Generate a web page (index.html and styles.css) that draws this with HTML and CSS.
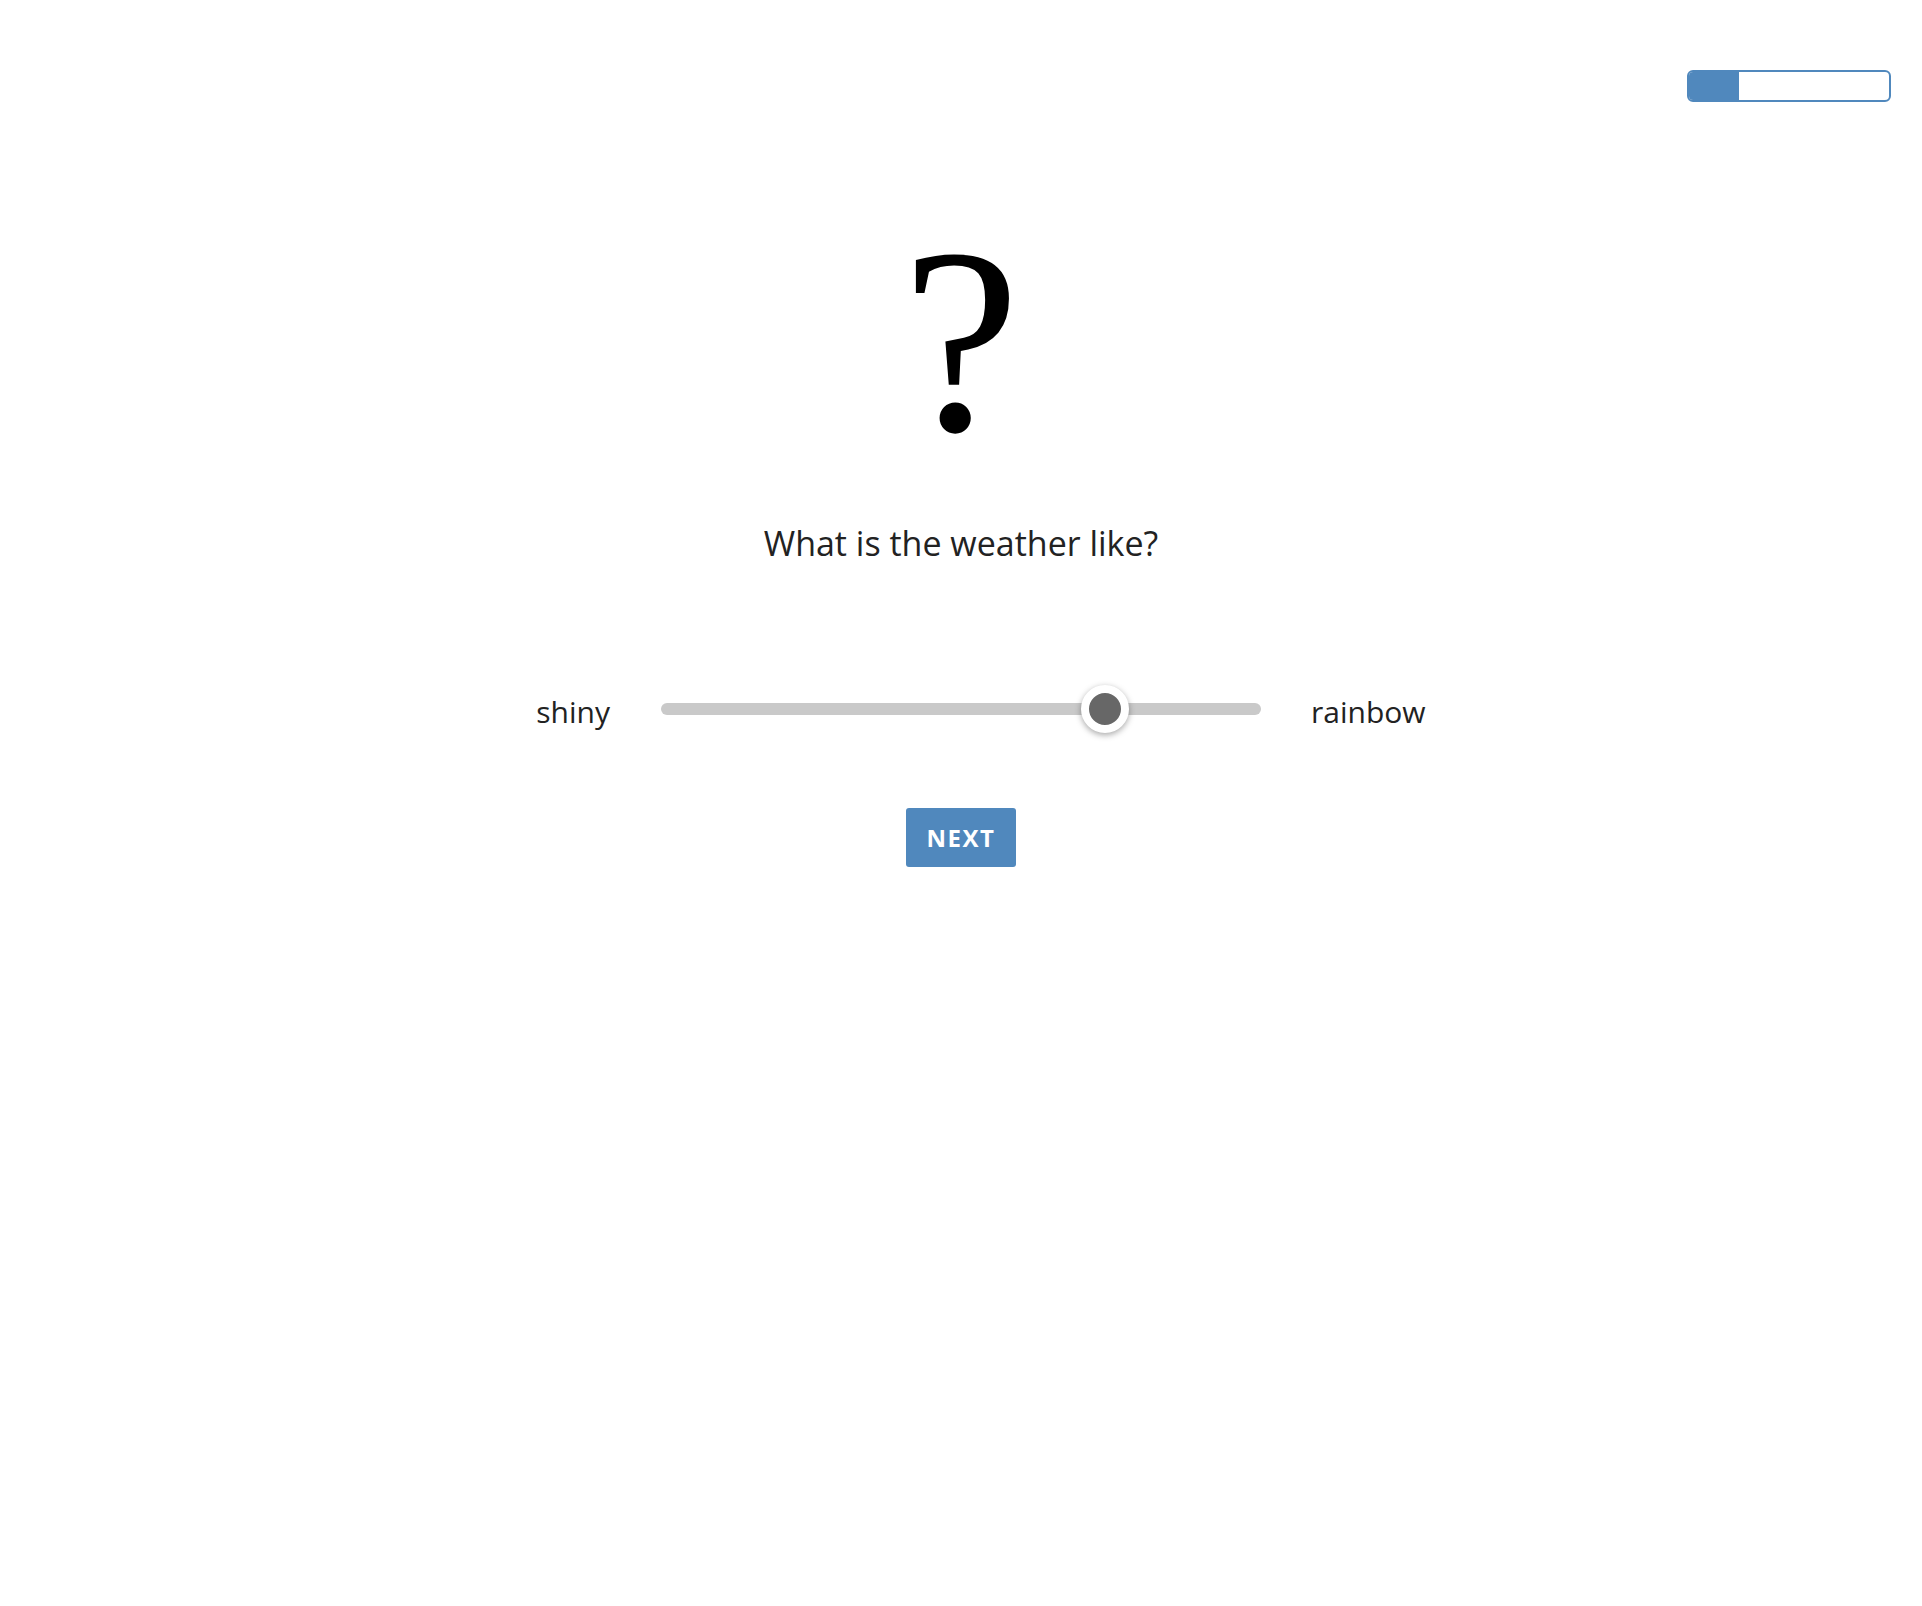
FILE: index.html
```html
<!DOCTYPE html>
<html lang="en">
<head>
<meta charset="utf-8">
<title>Weather question</title>
<link rel="stylesheet" href="styles.css">
</head>
<body>
<header class="topbar">
  <div class="progress"><div class="progress-fill" style="width: 25%"></div></div>
</header>
<main class="question">
  <div class="qmark">?</div>
  <p class="prompt">What is the weather like?</p>
  <div class="scale">
    <span class="label label-left">shiny</span>
    <div class="slider">
      <div class="track"></div>
      <div class="thumb" style="left: 420px"></div>
    </div>
    <span class="label label-right">rainbow</span>
  </div>
  <button class="next" type="button">NEXT</button>
</main>
</body>
</html>
```
FILE: styles.css
```css
html, body {
  margin: 0;
  padding: 0;
  background: #ffffff;
}
body {
  font-family: "Open Sans", "Liberation Sans", sans-serif;
  color: #222222;
}
.topbar {
  display: flex;
  justify-content: flex-end;
  padding: 70px 31px 0 0;
}
.progress {
  width: 204px;
  height: 32px;
  box-sizing: border-box;
  border: 2px solid #5088bd;
  border-radius: 6px;
  overflow: hidden;
  background: #ffffff;
}
.progress-fill {
  height: 100%;
  background: #5088bd;
}
.question {
  display: flex;
  flex-direction: column;
  align-items: center;
}
.qmark {
  font-family: "Liberation Serif", "Times New Roman", serif;
  font-size: 265px;
  line-height: 1;
  color: #000000;
  margin-top: 106px;
}
.prompt {
  margin: 47px 0 0;
  font-size: 34px;
  line-height: 46px;
}
.scale {
  display: grid;
  grid-template-columns: 1fr 600px 1fr;
  align-items: center;
  width: 100%;
  margin-top: 119px;
}
.label {
  font-size: 30px;
  line-height: 40px;
  padding-top: 6px;
}
.label-left {
  justify-self: end;
  padding-right: 51px;
}
.label-right {
  justify-self: start;
  padding-left: 50px;
}
.slider {
  position: relative;
  height: 48px;
  display: flex;
  align-items: center;
}
.track {
  width: 100%;
  height: 12px;
  border-radius: 6px;
  background: #c9c9c9;
}
.thumb {
  position: absolute;
  top: 0;
  width: 32px;
  height: 32px;
  border: 8px solid #ffffff;
  border-radius: 50%;
  background: #676767;
  box-shadow: 0 2px 6px rgba(0, 0, 0, 0.35);
}
.next {
  margin-top: 75px;
  width: 110px;
  height: 59px;
  border: none;
  border-radius: 3px;
  background: #5088bd;
  color: #ffffff;
  font-family: "Open Sans", "Liberation Sans", sans-serif;
  font-weight: 700;
  font-size: 24px;
  letter-spacing: 1.5px;
  padding: 0;
}
```
